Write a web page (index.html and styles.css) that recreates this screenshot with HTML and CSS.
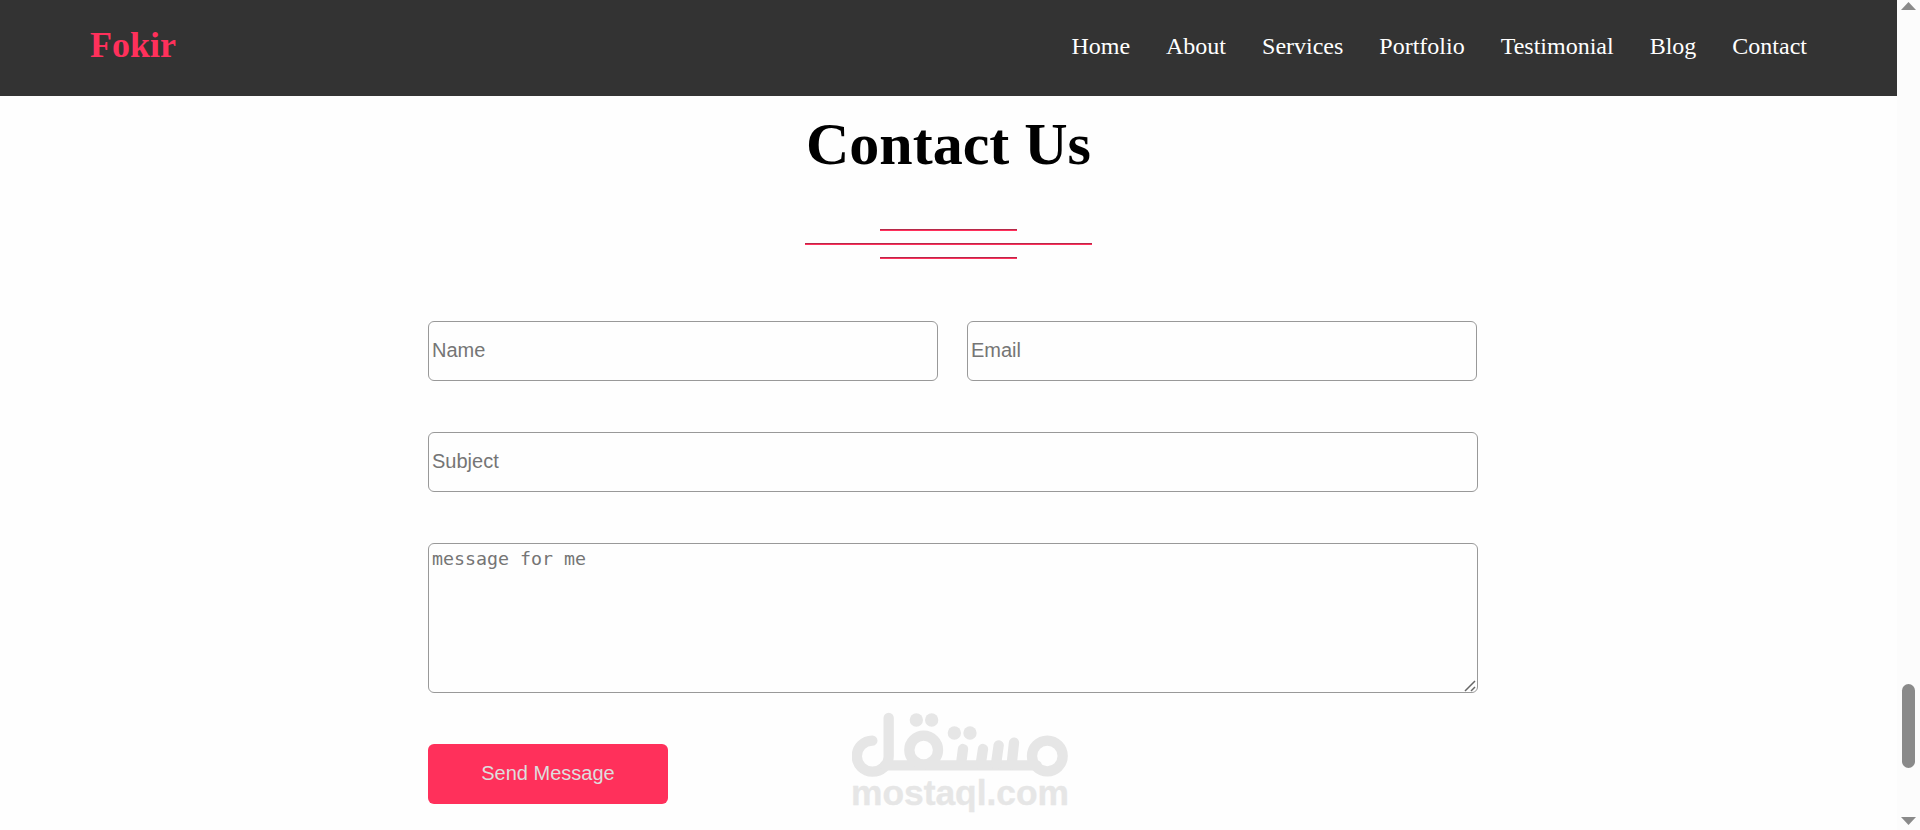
FILE: index.html
```html
<!DOCTYPE html>
<html lang="en">
<head>
  <meta charset="UTF-8">
  <meta name="viewport" content="width=device-width, initial-scale=1.0">
  <title>Fokir</title>
  <link rel="stylesheet" href="styles.css">
</head>
<body>
  <div class="page">
    <header class="header">
      <h2 class="logo">Fokir</h2>
      <nav>
        <ul class="menu">
          <li><a href="#home">Home</a></li>
          <li><a href="#about">About</a></li>
          <li><a href="#services">Services</a></li>
          <li><a href="#portfolio">Portfolio</a></li>
          <li><a href="#testimonial">Testimonial</a></li>
          <li><a href="#blog">Blog</a></li>
          <li><a href="#contact">Contact</a></li>
        </ul>
      </nav>
    </header>

    <section class="contact" id="contact">
      <h1 class="title">Contact Us</h1>
      <div class="lines">
        <hr class="short">
        <hr>
        <hr class="short">
      </div>

      <form class="form">
        <div class="row">
          <input type="text" placeholder="Name">
          <input type="email" placeholder="Email">
        </div>
        <input type="text" placeholder="Subject">
        <div class="message">
          <textarea placeholder="message for me"></textarea>
          <svg class="grip" viewBox="0 0 12 12"><path d="M1 11 11 1M7 11l4-4"/></svg>
        </div>
        <button type="submit">Send Message</button>
      </form>
    </section>
  </div>

  <div class="scrollbar">
    <svg class="arrow" viewBox="0 0 15 8"><path d="M7.5 0 15 8H0z"/></svg>
    <div class="thumb"></div>
    <svg class="arrow" viewBox="0 0 15 8"><path d="M0 0h15L7.5 8z"/></svg>
  </div>

  <svg class="watermark" viewBox="66 66 648 312">
    <g class="mark">
      <path d="M127 152a46 46 0 1 0 0 93C153 245 176 226 176 199V84"/>
      <path d="M165 226H620"/>
      <circle cx="281" cy="180" r="43"/>
      <circle cx="652" cy="198" r="46"/>
      <path d="M399 177l-6 46M459 177l-7 46M506 166l-8 57M552 158l-7 65"/>
    </g>
    <g class="dots">
      <circle cx="259" cy="90" r="20"/>
      <circle cx="305" cy="90" r="20"/>
      <circle cx="373" cy="129" r="20"/>
      <circle cx="420" cy="129" r="20"/>
    </g>
    <text x="63" y="346" textLength="654" lengthAdjust="spacingAndGlyphs">mostaql.com</text>
  </svg>
</body>
</html>
```
FILE: styles.css
```css
* {
  margin: 0;
  padding: 0;
  box-sizing: border-box;
}
body {
  display: flex;
  height: 100vh;
  overflow: hidden;
  background: #fefefe;
  font-family: "Liberation Serif", "Times New Roman", serif;
}
.page {
  flex: 1;
}

/* header */
.header {
  display: flex;
  justify-content: space-between;
  align-items: center;
  height: 96px;
  padding: 0 90px 4px;
  background: #333;
}
.logo {
  padding-bottom: 2px;
  font-size: 36px;
  color: #ff305b;
}
.menu {
  display: flex;
  gap: 36px;
  list-style: none;
}
.menu a {
  font-size: 24px;
  color: #fff;
  text-decoration: none;
}

/* contact */
.title {
  padding-top: 14px;
  font-size: 60px;
  line-height: 69px;
  text-align: center;
}
.lines {
  width: 287px;
  margin: 50px auto 62px;
}
.lines hr {
  height: 2px;
  margin-bottom: 12px;
  border: none;
  border-top: 1px solid #b82848;
  background: #ff305b;
}
.lines .short {
  width: 137px;
  margin-left: auto;
  margin-right: auto;
}
.form {
  display: flex;
  flex-direction: column;
  gap: 51px;
  width: 1050px;
  margin-left: 428px;
}
.row {
  display: flex;
  gap: 29px;
}
input,
textarea {
  display: block;
  width: 100%;
  height: 60px;
  padding: 2px 3px 4px;
  border: 1px solid #999;
  border-radius: 6px;
  background: #fefefe;
  font-family: "Liberation Sans", Arial, sans-serif;
  font-size: 20px;
}
.row input {
  width: 510px;
}
.message {
  position: relative;
}
textarea {
  height: 150px;
  padding-top: 4px;
  font-family: "DejaVu Sans Mono", monospace;
  font-size: 18.3px;
  resize: none;
}
.grip {
  position: absolute;
  right: 2px;
  bottom: 1px;
  width: 12px;
  height: 12px;
  fill: none;
  stroke: #666;
  stroke-width: 1.5;
}
::placeholder {
  color: #757575;
}
button {
  width: 240px;
  height: 60px;
  padding-bottom: 2px;
  border: none;
  border-radius: 6px;
  background: #ff305b;
  color: #ddd;
  font-family: "Liberation Sans", Arial, sans-serif;
  font-size: 20px;
  cursor: pointer;
}

/* scrollbar */
.scrollbar {
  display: flex;
  flex-direction: column;
  align-items: center;
  width: 23px;
  padding: 2px 0 5px;
  background: #fcfcfc;
}
.arrow {
  width: 15px;
  height: 8px;
  fill: #8a8a8a;
}
.thumb {
  width: 13px;
  height: 84px;
  margin: auto 0 49px;
  border-radius: 7px;
  background: #8a8a8a;
}

/* watermark */
.watermark {
  position: absolute;
  left: 852px;
  top: 712px;
  width: 216px;
  height: 104px;
  fill: #e6e6e6;
}
.mark {
  fill: none;
  stroke: #e6e6e6;
  stroke-width: 31;
  stroke-linecap: round;
}
.watermark text {
  font-family: "Liberation Sans", Arial, sans-serif;
  font-size: 104px;
  font-weight: bold;
  stroke: #e6e6e6;
  stroke-width: 1;
  stroke-linejoin: round;
}
```
